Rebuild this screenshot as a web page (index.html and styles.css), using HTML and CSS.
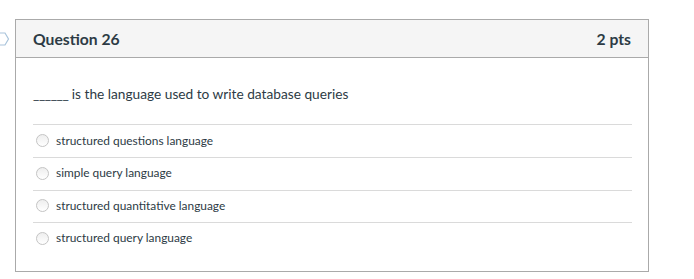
FILE: index.html
```html
<!DOCTYPE html>
<html lang="en">
<head>
  <meta charset="UTF-8" />
  <title>Question 26</title>
  <link rel="stylesheet" href="styles.css">
</head>
<body>
  <div class="quiz-row">
    <div class="flag">
      <svg width="10" height="14" viewBox="0 0 10 14">
        <path d="M-6 1 H5 L8.5 7 L5 13 H-6" fill="none" stroke="#a9c4db" stroke-width="1.2" />
      </svg>
    </div>

    <div class="question">
      <div class="question-header">
        <span class="question-name">Question 26</span>
        <span class="question-points">2 pts</span>
      </div>

      <div class="question-body">
        <p class="question-text"><span class="blank">______</span> is the language used to write database queries</p>

        <div class="answers">
          <label class="answer"><span class="radio"></span>structured questions language</label>
          <label class="answer"><span class="radio"></span>simple query language</label>
          <label class="answer"><span class="radio"></span>structured quantitative language</label>
          <label class="answer"><span class="radio"></span>structured query language</label>
        </div>
      </div>
    </div>
  </div>
</body>
</html>
```

FILE: styles.css
```css
body {
  margin: 0;
  background: #fff;
  font-family: Lato, "Open Sans", sans-serif;
  color: #2d3b45;
}

.quiz-row {
  display: flex;
  padding-top: 19px;
}

.flag {
  width: 15px;
  padding-top: 13px;
}

.flag svg {
  display: block;
}

.question {
  width: 632px;
  border: 1px solid #aaa;
}

.question-header {
  display: flex;
  justify-content: space-between;
  align-items: center;
  height: 37px;
  padding: 0 17px;
  background: #f5f5f5;
  border-bottom: 1px solid #aaa;
  font-size: 15.7px;
  font-weight: bold;
}

.question-body {
  padding: 27px 16px 16px 17px;
}

.question-text {
  margin: 0 0 21px;
  font-size: 13.7px;
  line-height: 18px;
}

.blank {
  letter-spacing: -0.4px;
}

.answer {
  display: flex;
  align-items: center;
  height: 33px;
  padding-bottom: 2px;
  box-sizing: border-box;
  border-top: 1px solid #dadada;
  font-size: 11.9px;
}

.answer + .answer {
  height: 32.5px;
}

.radio {
  width: 11px;
  height: 11px;
  margin: 1px 7px 0 3px;
  border: 1px solid #c4c4c4;
  border-radius: 50%;
  background: linear-gradient(#eee, #fff);
}
```
